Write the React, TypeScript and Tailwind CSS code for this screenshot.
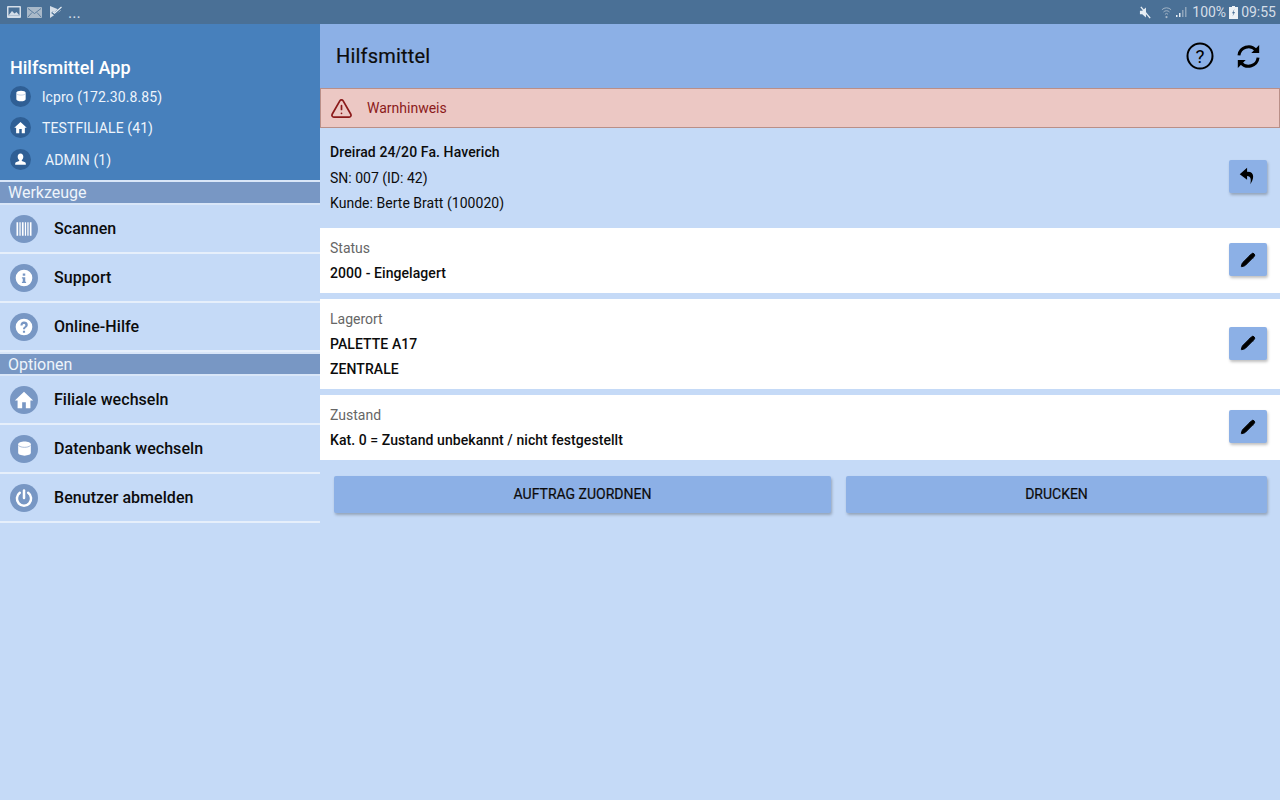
import { Pencil, TriangleAlert } from "lucide-react";
import type { ReactNode } from "react";

// Small glyphs shared between the drawer header and the drawer rows
function DbIcon({ className }: { className: string }) {
  return (
    <svg viewBox="0 0 24 24" className={className} fill="currentColor">
      <path d="M4 6.500C4 4.300 7.600 3 12 3s8 1.300 8 3.500v11c0 2.200-3.600 3.500-8 3.500s-8-1.300-8-3.500z" />
      <path d="M4.500 8.200C6 9.800 9 10.500 12 10.500s6-.7 7.500-2.300" fill="none" stroke="#7897c4" strokeWidth="0.8" />
    </svg>
  );
}

function HomeIcon({ className }: { className: string }) {
  return (
    <svg viewBox="0 0 24 24" className={className} fill="currentColor">
      <path d="M10 21v-6.500h4V21h5v-8.500h3L12 3 2 12.500h3V21z" />
    </svg>
  );
}

function UserIcon({ className }: { className: string }) {
  return (
    <svg viewBox="0 0 24 24" className={className} fill="currentColor">
      <path d="M12 2.500c-2.900 0-4.500 2.200-4.500 5 0 2.200 1 4.100 2.400 5.200v1.800c-2.800.9-6.400 2-6.400 3.800v2.200h17v-2.200c0-1.800-3.600-2.900-6.400-3.800v-1.800c1.400-1.100 2.400-3 2.400-5.200 0-2.800-1.600-5-4.500-5z" />
    </svg>
  );
}

function BarcodeIcon({ className }: { className: string }) {
  return (
    <svg viewBox="0 0 24 24" className={className} fill="currentColor">
      <path d="M3 4h2v16H3zM6.500 4h1.500v16H6.500zM9.500 4h2v16h-2zM13 4h1.500v16H13zM16 4h1.500v16H16zM19 4h2v16h-2z" />
    </svg>
  );
}

function InfoIcon({ className }: { className: string }) {
  return (
    <svg viewBox="0 0 24 24" className={className} fill="currentColor">
      <path d="M12 2a10 10 0 1 0 0 20 10 10 0 0 0 0-20zm1.500 4.500v2.700h-3V6.500zm1 11.500h-5v-1.500h1v-4h-1V11h4v5.500h1z" />
    </svg>
  );
}

function HelpIcon({ className }: { className: string }) {
  return (
    <svg viewBox="0 0 24 24" className={className} fill="currentColor">
      <path d="M12 2a10 10 0 1 0 0 20 10 10 0 0 0 0-20zm1.300 17h-2.600v-2.500h2.600zm2.600-7.600c-.5.700-1.100 1.100-1.600 1.500-.7.500-1 .9-1 1.900h-2.500c0-1.700.6-2.500 1.500-3.200.7-.5 1.300-.9 1.300-1.800 0-.9-.7-1.400-1.600-1.400-1 0-1.700.6-1.800 1.700H7.700C7.800 7 9.500 5.400 12 5.400c2.600 0 4.500 1.400 4.500 3.800 0 .9-.2 1.600-.6 2.200z" />
    </svg>
  );
}

function PowerIcon({ className }: { className: string }) {
  return (
    <svg viewBox="0 0 24 24" className={className} fill="none" stroke="currentColor" strokeWidth="3" strokeLinecap="round">
      <path d="M12 3v9" />
      <path d="M7 5.800a8.500 8.500 0 1 0 10 0" />
    </svg>
  );
}

function HeaderRow({ icon, label, indent }: { icon: ReactNode; label: string; indent?: boolean }) {
  return (
    <div className="h-[31.500px] flex items-center pl-[10px]">
      <div className="w-[21px] h-[21px] rounded-full bg-[#2f5f95] text-white flex items-center justify-center">{icon}</div>
      <span className={`text-[14px] tracking-[0.1px] mt-[2px] text-[#eef4fb] ${indent ? "ml-[14px]" : "ml-[11px]"}`}>{label}</span>
    </div>
  );
}

function SectionTitle({ label, h }: { label: string; h: string }) {
  return (
    <div className={`${h} border-y-2 border-[#d9e6f8] bg-[#7897c4] flex items-center pl-[8px] pt-[1px] text-[16px] leading-none text-[#eef4fb]`}>
      {label}
    </div>
  );
}

function MenuRow({ icon, label }: { icon: ReactNode; label: string }) {
  return (
    <div className="h-[49px] border-b-2 border-[#e6effb] flex items-center pl-[10px]">
      <div className="w-[28px] h-[28px] rounded-full bg-[#7897c4] text-white flex items-center justify-center">{icon}</div>
      <span className="ml-[16px] text-[16px] tracking-[0.05px] font-medium text-[#0c0c0c]">{label}</span>
    </div>
  );
}

function EditButton() {
  return (
    <button className="w-[38px] h-[33px] mb-[2px] rounded-[2px] bg-[#8cb0e6] shadow-[1px_2px_3px_rgba(0,0,0,0.25)] flex items-center justify-center">
      <Pencil size={16} fill="black" strokeWidth={1.500} className="text-black" />
    </button>
  );
}

function Card({ h, label, lines }: { h: string; label: string; lines: string[] }) {
  return (
    <div className={`${h} bg-white flex items-center justify-between pl-[10px] pr-[13px]`}>
      <div className="flex flex-col">
        <div className="h-[25px] flex items-center text-[14px] text-[#666666]">{label}</div>
        {lines.map((line) => (
          <div key={line} className="h-[25px] flex items-center text-[14px] tracking-[0.07px] font-medium text-[#0c0c0c]">
            {line}
          </div>
        ))}
      </div>
      <EditButton />
    </div>
  );
}

function StatusBar() {
  return (
    <div className="h-[24px] bg-[#4a7096] flex items-center justify-between pl-[7px] pr-[4px] text-[#d5dee8]">
      <div className="flex items-center gap-[6px]">
        <svg viewBox="0 0 14 12" className="w-[14px] h-[12px]">
          <rect width="14" height="12" rx="1" fill="#d5dee8" />
          <rect x="1.500" y="1.500" width="11" height="8" fill="#4a7096" />
          <path d="M1.500 9.500 5 5l2.500 2.500L9.500 6l3 3.500z" fill="#d5dee8" />
        </svg>
        <svg viewBox="0 0 15 11" className="w-[15px] h-[11px]">
          <rect width="15" height="11" rx="1" fill="#a9b9c9" />
          <path d="M1 1.500 7.500 6.500 14 1.500M1 10l4-4.500M14 10l-4-4.500" fill="none" stroke="#4a7096" strokeWidth="0.8" />
        </svg>
        <svg viewBox="0 0 13 14" className="w-[13px] h-[14px] ml-[1px]">
          <path d="M1 1l11 4.500L1 13z" fill="#d5dee8" />
          <path d="M3 7l2.500 2L12.500 2.500" fill="none" stroke="#4a7096" strokeWidth="2.500" />
          <path d="M3.500 6.500l2 1.700L12.500 2" fill="none" stroke="#e8eef4" strokeWidth="1.200" />
        </svg>
        <span className="text-[16px] leading-none mt-[1px]">...</span>
      </div>
      <div className="flex items-center">
        <svg viewBox="0 0 14 14" className="w-[13px] h-[13px] mr-[9px]">
          <path d="M1 5h2.500L7.500 1.500v11L3.500 9H1z" fill="#e8eef4" />
          <path d="M2 1l10 12" stroke="#e8eef4" strokeWidth="1.500" />
        </svg>
        <svg viewBox="0 0 12 14" className="w-[11px] h-[13px] mr-[3px]">
          <path d="M1 4a7 7 0 0 1 10 0M2.700 6.500a4.500 4.500 0 0 1 6.600 0M4.300 9a2.200 2.200 0 0 1 3.400 0" fill="none" stroke="#a9b9c9" strokeWidth="1" />
          <circle cx="6" cy="12" r="1.200" fill="#a9b9c9" />
        </svg>
        <svg viewBox="0 0 12 12" className="w-[12px] h-[12px] mr-[5px]">
          <path d="M1 9h1.500v2H1zM4 7h1.500v4H4z" fill="#e8eef4" />
          <path d="M7 4h1.500v7H7zM10 1h1.500v10H10z" fill="#8fa5bb" />
        </svg>
        <span className="text-[14px] leading-none">100%</span>
        <svg viewBox="0 0 9 13" className="w-[9px] h-[13px] mx-[3px]">
          <path d="M3 0h3v1h3v12H0V1h3z" fill="#eef2f6" />
          <path d="M5.500 3 3 7.200h1.500L3.500 10.500 6 6H4.500z" fill="#4a7096" />
        </svg>
        <span className="text-[14px] leading-none">09:55</span>
      </div>
    </div>
  );
}

export default function App() {
  return (
    <div className="w-[1280px] h-[800px] overflow-hidden flex flex-col bg-[#c5daf7] font-['Roboto',sans-serif]">
      <StatusBar />
      <div className="flex flex-1 min-h-0">
        {/* Navigation drawer */}
        <div className="w-[320px] shrink-0">
          <div className="h-[156px] bg-[#4780bc] flex flex-col justify-end pb-[5px]">
            <div className="pl-[10px] text-[18px] font-medium text-white leading-none mb-[4px]">Hilfsmittel App</div>
            <HeaderRow icon={<DbIcon className="w-[14px] h-[14px]" />} label="lcpro (172.30.8.85)" />
            <HeaderRow icon={<HomeIcon className="w-[15px] h-[15px]" />} label="TESTFILIALE (41)" />
            <HeaderRow icon={<UserIcon className="w-[15px] h-[15px]" />} label="ADMIN (1)" indent />
          </div>
          <SectionTitle h="h-[25px]" label="Werkzeuge" />
          <MenuRow icon={<BarcodeIcon className="w-[20px] h-[20px]" />} label="Scannen" />
          <MenuRow icon={<InfoIcon className="w-[20px] h-[20px]" />} label="Support" />
          <MenuRow icon={<HelpIcon className="w-[20px] h-[20px]" />} label="Online-Hilfe" />
          <SectionTitle h="h-[24px]" label="Optionen" />
          <MenuRow icon={<HomeIcon className="w-[22px] h-[22px]" />} label="Filiale wechseln" />
          <MenuRow icon={<DbIcon className="w-[19px] h-[19px]" />} label="Datenbank wechseln" />
          <MenuRow icon={<PowerIcon className="w-[20px] h-[20px]" />} label="Benutzer abmelden" />
        </div>

        {/* Detail pane */}
        <div className="flex-1 min-w-0">
          <div className="h-[64px] bg-[#8cb0e6] flex items-center justify-between pl-[16px] pr-[18px]">
            <span className="text-[20px] tracking-[0.2px] text-[#0c0c0c] [-webkit-text-stroke:0.2px_#0c0c0c]">Hilfsmittel</span>
            <div className="flex items-center gap-[21px]">
              <svg viewBox="0 0 28 28" className="w-[28px] h-[28px]">
                <circle cx="14" cy="14" r="12.500" fill="none" stroke="black" strokeWidth="2" />
                <text x="14" y="20.500" textAnchor="middle" fontSize="19" fontFamily="Roboto" fill="black">?</text>
              </svg>
              <svg viewBox="0 0 24 24" className="w-[27px] h-[27px]" fill="none" stroke="black" strokeWidth="2.600">
                <path d="M3.500 11a8.600 8.600 0 0 1 15-4.700" />
                <path d="M20.500 13a8.600 8.600 0 0 1-15 4.700" />
                <path d="M21.500 1.800v7h-7z" fill="black" stroke="none" />
                <path d="M2.500 22.200v-7h7z" fill="black" stroke="none" />
              </svg>
            </div>
          </div>

          <div className="h-[40px] bg-[#ecc8c4] border border-[#b98f88] flex items-center pl-[9px]">
            <TriangleAlert size={23} strokeWidth={1.800} className="text-[#8b1a1a]" />
            <span className="ml-[14px] text-[14px] text-[#8b1a1a]">Warnhinweis</span>
          </div>

          <div className="h-[100px] flex items-center justify-between pl-[10px] pr-[13px]">
            <div className="flex flex-col">
              <div className="h-[25px] flex items-center pb-[1px] text-[14px] tracking-[0.1px] font-medium text-[#0c0c0c]">Dreirad 24/20 Fa. Haverich</div>
              <div className="h-[25px] flex items-center text-[14px] text-[#0c0c0c]">SN: 007 (ID: 42)</div>
              <div className="h-[25px] flex items-center text-[14px] tracking-[0.03px] text-[#0c0c0c]">Kunde: Berte Bratt (100020)</div>
            </div>
            <button className="w-[38px] h-[33px] mb-[4px] rounded-[2px] bg-[#8cb0e6] shadow-[1px_2px_3px_rgba(0,0,0,0.25)] flex items-center justify-center">
              <svg viewBox="0 0 24 24" className="w-[22px] h-[22px]" fill="black">
                <path d="M11 3 3 10l8 6v-4c3.500 0 5 3 3.500 9 4-5 5.500-14-3.500-13.500z" />
              </svg>
            </button>
          </div>

          <div className="flex flex-col gap-[6px]">
            <Card h="h-[65px]" label="Status" lines={["2000 - Eingelagert"]} />
            <Card h="h-[90px]" label="Lagerort" lines={["PALETTE A17", "ZENTRALE"]} />
            <Card h="h-[65px]" label="Zustand" lines={["Kat. 0 = Zustand unbekannt / nicht festgestellt"]} />
          </div>

          <div className="flex gap-[15px] pl-[14px] pr-[13px] mt-[16px]">
            <button className="w-[497px] h-[37px] rounded-[2px] bg-[#8cb0e6] shadow-[1px_2px_3px_rgba(0,0,0,0.25)] text-[14px] text-[#0c0c0c] [-webkit-text-stroke:0.2px_#0c0c0c]">
              AUFTRAG ZUORDNEN
            </button>
            <button className="flex-1 h-[37px] rounded-[2px] bg-[#8cb0e6] shadow-[1px_2px_3px_rgba(0,0,0,0.25)] text-[14px] text-[#0c0c0c] [-webkit-text-stroke:0.2px_#0c0c0c]">
              DRUCKEN
            </button>
          </div>
        </div>
      </div>
    </div>
  );
}
